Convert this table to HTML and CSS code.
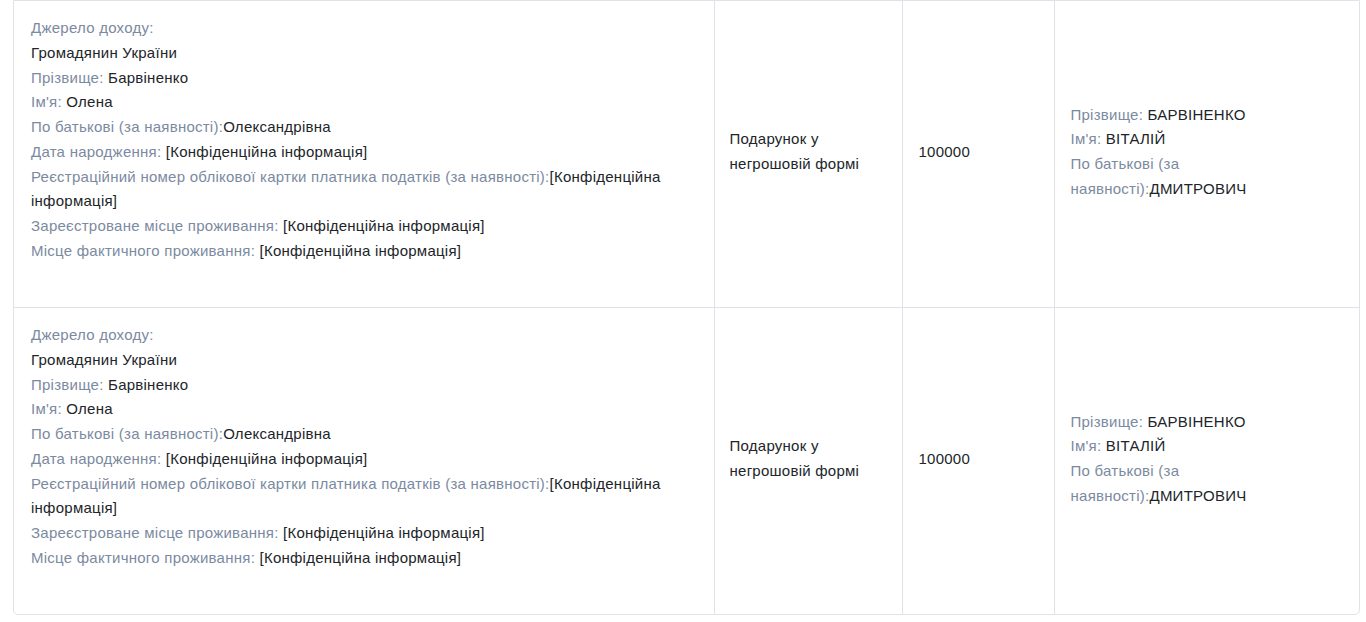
FILE: index.html
```html
<!DOCTYPE html>
<html lang="uk">
<head>
<meta charset="utf-8">
<link rel="stylesheet" href="styles.css">
</head>
<body>
<div class="card">
<table class="decl">
<colgroup>
<col class="c1"><col class="c2"><col class="c3"><col class="c4">
</colgroup>
<tbody>
<tr>
<td class="source">
<div class="info">
<div><span class="lbl">Джерело доходу:</span></div>
<div><span class="val">Громадянин України</span></div>
<div><span class="lbl">Прізвище: </span><span class="val">Барвіненко</span></div>
<div><span class="lbl">Ім'я: </span><span class="val">Олена</span></div>
<div><span class="lbl">По батькові (за наявності):</span><span class="val">Олександрівна</span></div>
<div><span class="lbl">Дата народження: </span><span class="val">[Конфіденційна інформація]</span></div>
<div><span class="lbl">Реєстраційний номер облікової картки платника податків (за наявності):</span><span class="val">[Конфіденційна інформація]</span></div>
<div><span class="lbl">Зареєстроване місце проживання: </span><span class="val">[Конфіденційна інформація]</span></div>
<div><span class="lbl">Місце фактичного проживання: </span><span class="val">[Конфіденційна інформація]</span></div>
</div>
</td>
<td class="type">Подарунок у негрошовій формі</td>
<td class="amount">100000</td>
<td class="person">
<div><span class="lbl">Прізвище: </span><span class="val">БАРВІНЕНКО</span></div>
<div><span class="lbl">Ім'я: </span><span class="val">ВІТАЛІЙ</span></div>
<div><span class="lbl">По батькові (за наявності):</span><span class="val">ДМИТРОВИЧ</span></div>
</td>
</tr>
<tr>
<td class="source">
<div class="info">
<div><span class="lbl">Джерело доходу:</span></div>
<div><span class="val">Громадянин України</span></div>
<div><span class="lbl">Прізвище: </span><span class="val">Барвіненко</span></div>
<div><span class="lbl">Ім'я: </span><span class="val">Олена</span></div>
<div><span class="lbl">По батькові (за наявності):</span><span class="val">Олександрівна</span></div>
<div><span class="lbl">Дата народження: </span><span class="val">[Конфіденційна інформація]</span></div>
<div><span class="lbl">Реєстраційний номер облікової картки платника податків (за наявності):</span><span class="val">[Конфіденційна інформація]</span></div>
<div><span class="lbl">Зареєстроване місце проживання: </span><span class="val">[Конфіденційна інформація]</span></div>
<div><span class="lbl">Місце фактичного проживання: </span><span class="val">[Конфіденційна інформація]</span></div>
</div>
</td>
<td class="type">Подарунок у негрошовій формі</td>
<td class="amount">100000</td>
<td class="person">
<div><span class="lbl">Прізвище: </span><span class="val">БАРВІНЕНКО</span></div>
<div><span class="lbl">Ім'я: </span><span class="val">ВІТАЛІЙ</span></div>
<div><span class="lbl">По батькові (за наявності):</span><span class="val">ДМИТРОВИЧ</span></div>
</td>
</tr>
</tbody>
</table>
</div>
</body>
</html>
```
FILE: styles.css
```css
html, body {
  margin: 0;
  padding: 0;
  background: #fff;
}
body {
  font-family: "Liberation Sans", Arial, sans-serif;
  font-size: 15px;
  letter-spacing: 0.25px;
  line-height: 24.75px;
  color: #212529;
}
.card {
  margin-left: 13px;
  width: 1347px;
  border: 1px solid #dfe3e8;
  border-radius: 0 0 5px 5px;
  overflow: hidden;
  box-sizing: border-box;
}
.decl {
  width: 1345px;
  border-collapse: collapse;
  table-layout: fixed;
}
.c1 { width: 700px; }
.c2 { width: 188px; }
.c3 { width: 152px; }
.c4 { width: 305px; }
.decl td {
  border-left: 1px solid #dfe3e8;
  border-top: 1px solid #dfe3e8;
  padding: 12px 15px 16px;
  vertical-align: middle;
}
.decl tr:first-child td { border-top: none; }
.decl td:first-child { border-left: none; }
.decl td.source {
  padding: 15px 17px 43.5px 17px;
  vertical-align: top;
}
.decl td.amount, .decl td.person {
  padding-left: 16px;
}
.lbl { color: #7b8a9f; }
.val { color: #212529; }
```
